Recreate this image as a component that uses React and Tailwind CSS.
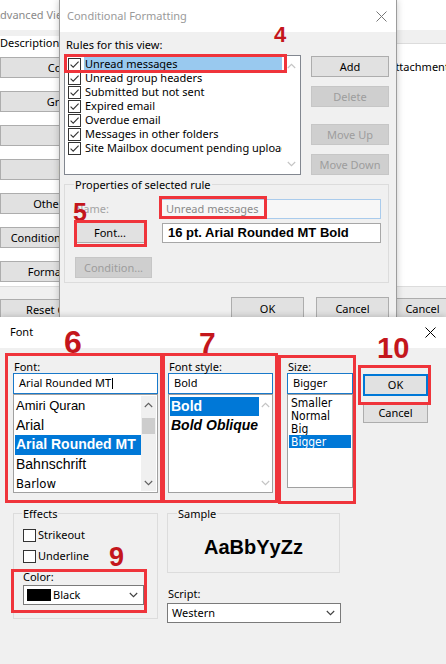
import React from "react";

const rules = [
  "Unread messages",
  "Unread group headers",
  "Submitted but not sent",
  "Expired email",
  "Overdue email",
  "Messages in other folders",
  "Site Mailbox document pending upload",
];

// only the first description shows past the dialog on top
const viewRows = [
  ["Columns...", "Importance, Reminder, Icon, Flag Status, Attachment, From, Subject, Received, Size"],
  ["Group By..."],
  ["Sort..."],
  ["Filter..."],
  ["Other Settings..."],
  ["Conditional Formatting..."],
  ["Format Columns..."],
];

function Up({ color = "#c4c4c4" }) {
  return (
    <svg width="9" height="6" viewBox="0 0 9 6">
      <path d="M0.8 5 L4.5 1.3 L8.2 5" fill="none" stroke={color} strokeWidth="1.1" />
    </svg>
  );
}

function Down({ color = "#c4c4c4" }) {
  return (
    <svg width="9" height="6" viewBox="0 0 9 6">
      <path d="M0.8 1 L4.5 4.7 L8.2 1" fill="none" stroke={color} strokeWidth="1.1" />
    </svg>
  );
}

function CloseX({ color = "#000" }) {
  return (
    <svg width="11" height="11" viewBox="0 0 11 11">
      <path d="M0.5 0.5 L10.5 10.5 M10.5 0.5 L0.5 10.5" fill="none" stroke={color} strokeWidth="1" />
    </svg>
  );
}

function Check({ checked }) {
  return (
    <span className="flex h-[13px] w-[13px] shrink-0 items-center justify-center border border-[#333333] bg-white">
      {checked && (
        <svg width="11" height="11" viewBox="0 0 11 11">
          <path d="M1.6 5.6 L4.2 8.2 L9.6 2.6" fill="none" stroke="#333" strokeWidth="1.1" />
        </svg>
      )}
    </span>
  );
}

function Btn({ children, className = "", disabled }) {
  return (
    <div
      className={`flex shrink-0 items-center justify-center whitespace-nowrap border text-[11px] leading-none ${
        disabled
          ? "border-[#c6c6c6] bg-[#cfcfcf] text-[#9d9d9d]"
          : "border-[#adadad] bg-[#e1e1e1] text-black"
      } ${className}`}
    >
      {children}
    </div>
  );
}

function Box({ className }) {
  return <div className={`pointer-events-none absolute border-[3px] border-[#ef343b] ${className}`} />;
}

function Num({ className, children }) {
  return (
    <div
      className={`pointer-events-none absolute font-['Liberation_Sans',Arial,sans-serif] font-bold leading-none text-[#c4161c] ${className}`}
    >
      {children}
    </div>
  );
}

function BackWindow() {
  return (
    <div className="absolute left-0 top-0 flex h-[320px] w-[446px] flex-col bg-[#f0f0f0]">
      <div className="flex h-[30px] shrink-0 items-center bg-white">
        <span className="-ml-[7px] whitespace-nowrap text-[11px] text-[#8a8a8a]">Advanced View Settings</span>
      </div>
      <div className="relative mt-[13px] h-[247px] border-y border-[#dcdcdc] bg-white">
        <span className="absolute -top-[8px] left-0 bg-white pr-[2px] text-[11px] leading-[14px]">Description</span>
        <div className="flex flex-col pt-[13px]">
          {viewRows.map(([label, desc], i) => (
            <div key={label} className={`flex h-[21px] items-center ${i === 0 ? "" : "mt-[13px]"}`}>
              <Btn className="h-[21px] w-[150px]">{label}</Btn>
              {desc && <span className="ml-[27px] whitespace-nowrap text-[11px]">{desc}</span>}
            </div>
          ))}
        </div>
      </div>
      <div className="mt-[12px] flex items-start">
        <Btn className="h-[21px] w-[150px]">Reset Current View</Btn>
        <Btn className="ml-[235px] mt-[-1px] h-[21px] w-[75px]">Cancel</Btn>
      </div>
    </div>
  );
}

function CondFormatting() {
  return (
    <div className="absolute left-[59px] top-0 h-[318px] w-[338px] border-x border-[#9c9c9c] bg-[#f0f0f0] shadow-[0_0_7px_rgba(0,0,0,0.22)]">
      <div className="flex h-[32px] items-center justify-between bg-white pl-[7px] pr-[9px]">
        <span className="text-[11px] text-[#9a9a9a]">Conditional Formatting</span>
        <CloseX color="#777" />
      </div>
      <div className="px-[4px] pt-[5px]">
        <div className="pl-[2px] text-[11px] leading-[15px]">Rules for this view:</div>
        <div className="mt-[3px] flex items-start">
          <div className="flex h-[120px] w-[237px] border border-[#828790] bg-white">
            <div className="flex w-[218px] flex-col pt-[1px]">
              {rules.map((r, i) => (
                <div key={r} className="flex h-[14px] items-center pl-[3px] pr-[1px]">
                  <Check checked />
                  <span
                    className={`ml-[3px] h-[14px] flex-1 overflow-hidden whitespace-nowrap pl-[1px] text-[11px] leading-[14px] ${
                      i === 0 ? "bg-[#99c9ef]" : ""
                    }`}
                  >
                    {r}
                  </span>
                </div>
              ))}
            </div>
            <div className="flex flex-1 flex-col items-center justify-between py-[7px]">
              <Up />
              <Down />
            </div>
          </div>
          <div className="ml-[10px] flex w-[78px] flex-col">
            <Btn className="mt-[1px] h-[21px]">Add</Btn>
            <Btn disabled className="mt-[9px] h-[21px]">Delete</Btn>
            <Btn disabled className="mt-[17px] h-[21px]">Move Up</Btn>
            <Btn disabled className="mt-[9px] h-[21px]">Move Down</Btn>
          </div>
        </div>

        <div className="relative mt-[9px] h-[99px] w-[325px] border border-[#dcdcdc] pl-[10px] pt-[14px]">
          <span className="absolute -top-[8px] left-[9px] bg-[#f0f0f0] px-[1px] text-[11px] leading-[15px]">
            Properties of selected rule
          </span>
          <div className="flex h-[20px] items-center">
            <span className="w-[85px] text-[11px] text-[#a3a3a3]">Name:</span>
            <div className="flex h-[20px] w-[221px] items-center border border-[#a9cbec] bg-[#f7f7f7] pl-[5px] text-[11px] text-[#8a8a8a]">
              Unread messages
            </div>
          </div>
          <div className="mt-[3px] flex items-center">
            <Btn className="h-[21px] w-[70px]">Font...</Btn>
            <div className="ml-[17px] flex h-[20px] w-[219px] items-center border border-[#a7a7a7] bg-white pl-[5px] font-['Liberation_Sans',Arial,sans-serif] text-[13px] font-bold">
              16 pt. Arial Rounded MT Bold
            </div>
          </div>
          <Btn disabled className="mt-[14px] h-[21px] w-[77px]">Condition...</Btn>
        </div>

        <div className="mt-[14px] flex w-[325px] justify-end gap-[12px]">
          <Btn className="h-[22px] w-[73px]">OK</Btn>
          <Btn className="h-[22px] w-[73px]">Cancel</Btn>
        </div>
      </div>
    </div>
  );
}

function FontDialog() {
  return (
    <div className="absolute left-0 top-[317px] h-[347px] w-[446px] bg-[#f0f0f0] shadow-[0_-1px_6px_rgba(0,0,0,0.18)]">
      <div className="flex h-[31px] items-center justify-between bg-white pl-[10px] pr-[10px]">
        <span className="text-[11px]">Font</span>
        <CloseX />
      </div>
      <div className="pl-[13px] pt-[12px]">
        <div className="flex items-start">
          {/* font name */}
          <div className="w-[145px]">
            <div className="pl-[1px] text-[11px] leading-[13px]">Font:</div>
            <div className="flex h-[21px] items-center border border-[#1979ca] bg-white pl-[5px] text-[11px]">
              Arial Rounded MT
              <span className="ml-[1px] h-[11px] w-px bg-black" />
            </div>
            <div className="flex h-[99px] border border-[#a0a0a0] bg-white p-[1px] font-['Liberation_Sans',Arial,sans-serif]">
              <div className="flex w-[126px] flex-col">
                <div className="flex h-[19.5px] items-center pl-[1px] text-[13px]">Amiri Quran</div>
                <div className="flex h-[19.5px] items-center pl-[1px] text-[14px]">Arial</div>
                <div className="flex h-[19.5px] items-center bg-[#0078d7] pl-[1px] text-[14px] font-bold text-white">
                  Arial Rounded MT
                </div>
                <div className="flex h-[19.5px] items-center pl-[1px] text-[14px]">Bahnschrift</div>
                <div className="flex h-[19.5px] items-center pl-[1px] font-['Liberation_Sans_Narrow','DejaVu_Sans_Condensed',sans-serif] text-[13px]">
                  Barlow
                </div>
              </div>
              <div className="flex flex-1 flex-col items-center bg-[#f0f0f0]">
                <div className="flex h-[17px] items-center">
                  <Up color="#606060" />
                </div>
                <div className="mt-[5px] h-[16px] w-[13px] bg-[#cdcdcd]" />
                <div className="flex-1" />
                <div className="flex h-[17px] items-center">
                  <Down color="#606060" />
                </div>
              </div>
            </div>
          </div>

          {/* font style */}
          <div className="ml-[10px] w-[105px]">
            <div className="pl-[1px] text-[11px] leading-[13px]">Font style:</div>
            <div className="flex h-[21px] items-center border border-[#1979ca] bg-white pl-[5px] text-[11px]">Bold</div>
            <div className="flex h-[99px] border border-[#a0a0a0] bg-white p-[1px] font-['Liberation_Sans',Arial,sans-serif]">
              <div className="flex w-[89px] flex-col pt-[1px]">
                <div className="flex h-[19px] items-center bg-[#0078d7] pl-[1px] text-[14px] font-bold text-white">Bold</div>
                <div className="flex h-[19px] items-center pl-[1px] text-[14px] font-bold italic">Bold Oblique</div>
              </div>
              <div className="flex flex-1 flex-col items-center justify-between">
                <div className="flex h-[17px] items-center">
                  <Up />
                </div>
                <div className="flex h-[17px] items-center">
                  <Down />
                </div>
              </div>
            </div>
          </div>

          {/* size */}
          <div className="ml-[14px] w-[66px]">
            <div className="pl-[1px] text-[11px] leading-[13px]">Size:</div>
            <div className="flex h-[21px] items-center border border-[#1979ca] bg-white pl-[5px] text-[11px]">Bigger</div>
            <div className="flex h-[94px] flex-col border border-[#a0a0a0] bg-white px-[1px] pt-[1px] font-['Liberation_Sans_Narrow','DejaVu_Sans_Condensed',sans-serif] text-[12px]">
              <div className="flex h-[13px] items-center pl-[2px]">Smaller</div>
              <div className="flex h-[13px] items-center pl-[2px]">Normal</div>
              <div className="flex h-[13px] items-center pl-[2px]">Big</div>
              <div className="flex h-[13px] items-center bg-[#0078d7] pl-[2px] text-white">Bigger</div>
            </div>
          </div>

          {/* buttons */}
          <div className="ml-[10px] flex w-[65px] flex-col pt-[14px]">
            <div className="flex h-[22px] items-center justify-center border-2 border-[#0078d7] bg-[#e1e1e1] text-[11px]">
              OK
            </div>
            <Btn className="mt-[6px] h-[21px]">Cancel</Btn>
          </div>
        </div>

        <div className="mt-[20px] flex items-start">
          {/* effects */}
          <div className="relative h-[106px] w-[145px] border border-[#dcdcdc] pl-[9px] pt-[14px]">
            <span className="absolute -top-[8px] left-[8px] bg-[#f0f0f0] px-[1px] text-[11px] leading-[15px]">Effects</span>
            <div className="flex h-[14px] items-center">
              <Check />
              <span className="ml-[2px] text-[11px]">Strikeout</span>
            </div>
            <div className="mt-[7px] flex h-[14px] items-center">
              <Check />
              <span className="ml-[2px] text-[11px]">Underline</span>
            </div>
            <div className="mt-[7px] text-[11px] leading-[14px]">Color:</div>
            <div className="mt-[1px] flex h-[20px] w-[121px] items-center border border-[#7a7a7a] bg-white pl-[3px] pr-[5px]">
              <span className="h-[12px] w-[24px] bg-black" />
              <span className="ml-[2px] flex-1 text-[11px]">Black</span>
              <Down color="#404040" />
            </div>
          </div>

          {/* sample + script */}
          <div className="ml-[9px] w-[174px]">
            <div className="relative flex h-[60px] w-[173px] items-center justify-center border border-[#dcdcdc] pt-[8px]">
              <span className="absolute -top-[8px] left-[9px] bg-[#f0f0f0] px-[1px] text-[11px] leading-[15px]">Sample</span>
              <span className="font-['Liberation_Sans',Arial,sans-serif] text-[20px] font-bold leading-[20px]">AaBbYyZz</span>
            </div>
            <div className="mt-[14px] pl-[1px] text-[11px] leading-[14px]">Script:</div>
            <div className="mt-[2px] flex h-[20px] items-center border border-[#7a7a7a] bg-white pl-[4px] pr-[5px]">
              <span className="flex-1 text-[11px]">Western</span>
              <Down color="#404040" />
            </div>
          </div>
        </div>
      </div>
    </div>
  );
}

function Marks() {
  return (
    <>
      <Box className="left-[64px] top-[54px] h-[19px] w-[223px]" />
      <Num className="left-[274px] top-[24px] text-[22px]">4</Num>
      <Box className="left-[159px] top-[196px] h-[23px] w-[108px]" />
      <Num className="left-[73px] top-[200px] text-[25px]">5</Num>
      <Box className="left-[74px] top-[220px] h-[27px] w-[73px]" />

      <Num className="left-[64px] top-[326px] text-[32px]">6</Num>
      <Box className="left-[5px] top-[353px] h-[150px] w-[158px]" />
      <Num className="left-[199px] top-[328px] text-[30px]">7</Num>
      <Box className="left-[162px] top-[353px] h-[150px] w-[116px]" />
      <Box className="left-[278px] top-[355px] h-[149px] w-[78px]" />
      <Num className="left-[377px] top-[334px] text-[29px]">10</Num>
      <Box className="left-[358px] top-[365px] h-[40px] w-[73px]" />
      <Num className="left-[109px] top-[544px] text-[27px]">9</Num>
      <Box className="left-[11px] top-[569px] h-[44px] w-[136px]" />
    </>
  );
}

export default function App() {
  return (
    <div className="relative h-[664px] w-[446px] overflow-hidden bg-[#f0f0f0] font-['Noto_Sans',sans-serif] text-black">
      <BackWindow />
      <CondFormatting />
      <FontDialog />
      <Marks />
    </div>
  );
}
